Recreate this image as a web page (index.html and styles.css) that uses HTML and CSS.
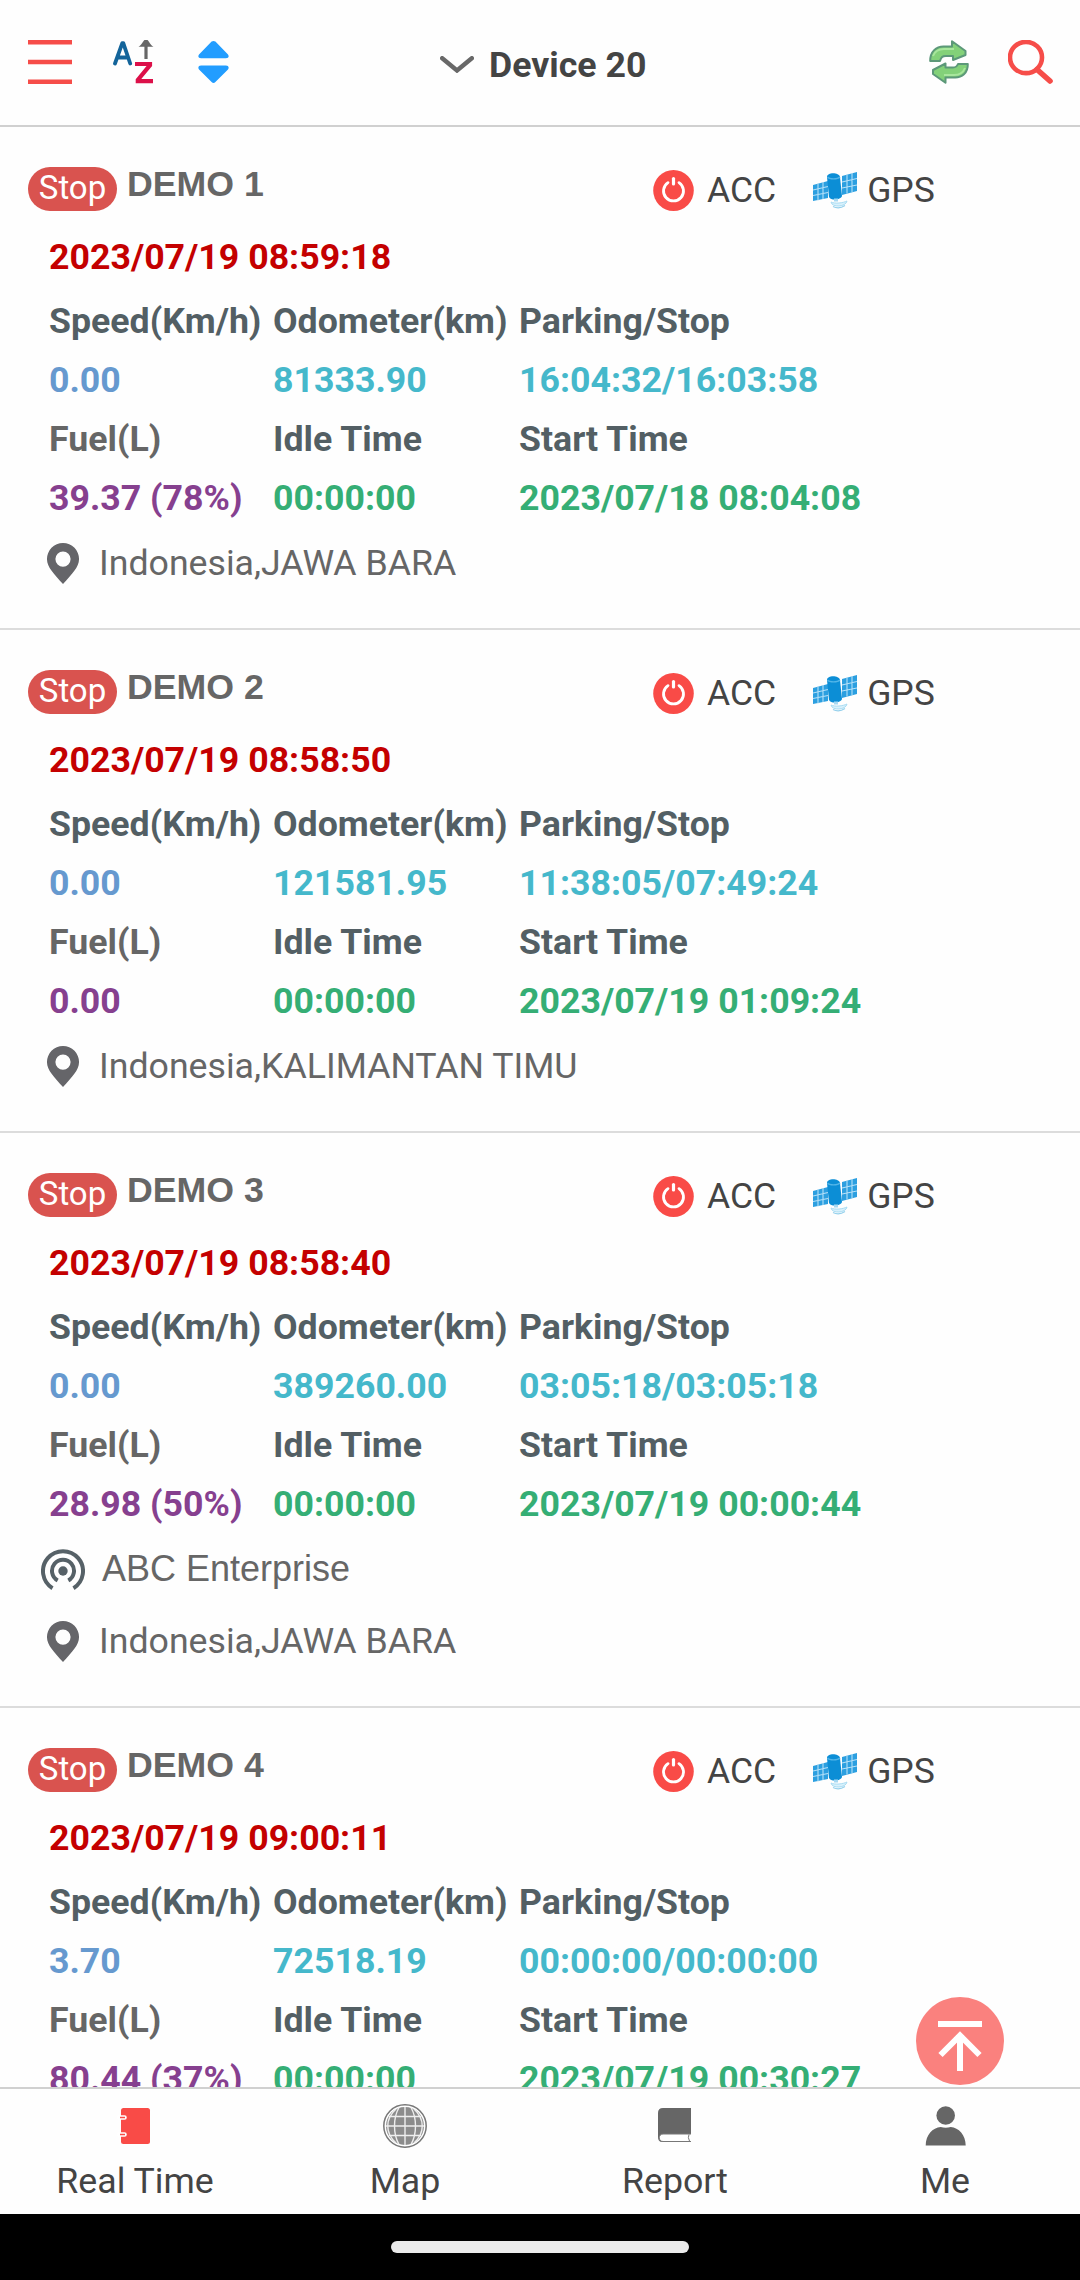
FILE: index.html
```html
<!DOCTYPE html>
<html lang="en">
<head>
<meta charset="utf-8">
<title>Device list</title>
<link rel="stylesheet" href="styles.css">
</head>
<body>
<svg class="sprite" width="0" height="0" aria-hidden="true">
  <symbol id="power" viewBox="0 0 41 41">
    <ellipse cx="20.500" cy="20.500" rx="20.300" ry="20.500" fill="#f94b47"/>
    <path d="M15 12.600a10 10 0 1 0 11 0" fill="none" stroke="#fff" stroke-width="2.800" stroke-linecap="round"/>
    <path d="M20.500 8.500v5.500" stroke="#fff" stroke-width="3.200" stroke-linecap="round"/>
  </symbol>
  <symbol id="satellite" viewBox="0 0 44 38">
    <path d="M0 14l15-4v17L0 30zM29 5l15-4v19l-15 4z" fill="#2c9fe0"/>
    <path d="M0 19l15-3.500M0 24.500l15-3M5 12.500v17M10 11v17M29 11l15-3.500M29 17l15-3M34 3.500v19M39 2v19" stroke="#b5e0f8" stroke-width="1.100"/>
    <path d="M14 6c0-5 12-5 13 0l2 19c-1 4-11 5-13 1z" fill="#0c8ed6"/>
    <path d="M14.500 6c2 2.500 10 2.500 12.500 0" fill="none" stroke="#53b5e8" stroke-width="1.300"/>
    <path d="M23 27.500v3" stroke="#a5d8f2" stroke-width="4"/>
    <path d="M18 31c1 6 15 5 16-1-4 2-12 3-16 1z" fill="#d8f1fc" stroke="#a9dcf3" stroke-width="1"/>
    <path d="M20 35.500c4 2 9 1 12-1" fill="none" stroke="#94d0ec" stroke-width="1.200"/>
  </symbol>
  <symbol id="pin" viewBox="0 0 32 41">
    <path fill-rule="evenodd" d="M16 0a16 16 0 0 1 16 16.500C32 24 25 31 16 41 7 31 0 24 0 16.500A16 16 0 0 1 16 0zm0 8.500a7.600 7.600 0 1 0 0 15.200 7.600 7.600 0 0 0 0-15.200z" fill="#656569"/>
  </symbol>
  <symbol id="beacon" viewBox="0 0 44 41">
    <circle cx="22" cy="22" r="4.700" fill="#566167"/>
    <path d="M16.700 31.500a11 11 0 1 1 10.600 0M11.500 39.200a20 20 0 1 1 21 0" fill="none" stroke="#566167" stroke-width="4"/>
  </symbol>
</svg>

<div class="screen">
  <header class="topbar">
    <div class="tools-left">
      <svg width="44" height="44" viewBox="0 0 44 44"><path d="M0 2.200h44M0 22h44M0 41.700h44" stroke="#f64d49" stroke-width="4.600"/></svg>
      <svg class="az" width="42" height="44" viewBox="0 0 42 44">
        <path d="M2 23.500L9.300 3.200h1L17.200 23.500M4.500 17.500h10.500" fill="none" stroke="#13649a" stroke-width="3.800" stroke-linecap="round" stroke-linejoin="round"/>
        <path d="M22 24h15v1.200L24.800 40v1.200H40" fill="none" stroke="#dc1049" stroke-width="4.200"/>
        <path d="M33 19V6" stroke="#666" stroke-width="3.200"/>
        <path d="M25.500 6.700C29 5 30 1 31.500 0h3c1.500 1 2.500 5 6 6.700z" fill="#666"/>
      </svg>
      <svg class="sort" width="31" height="44" viewBox="0 0 31 44"><path d="M13.600 1.600q1.900-1.400 3.800 0L30 14.500q2 3.500-2 3.800H3q-4-.3-2-3.800zM1 29.500q-2-3.700 2-4h25q4 .3 2 4L17.400 42q-1.900 1.800-3.800 0z" fill="#229dff"/></svg>
    </div>
    <div class="heading">
      <svg width="34" height="17" viewBox="0 0 34 17"><path d="M2.200 2.200L17 14.500 31.800 2.200" fill="none" stroke="#686868" stroke-width="4.400" stroke-linecap="round"/></svg>
      <h1>Device 20</h1>
    </div>
    <div class="tools-right">
      <svg width="40" height="44" viewBox="0 0 40 44">
        <g fill="#83d179" stroke="#5c9879" stroke-width="2" stroke-linejoin="round">
          <path d="M1.200 21C1 12 7 5.800 16 6.500h7V1.200L36.500 11v4L24 20v-4h-7c-4 0-5 1.500-6 5z"/>
          <path d="M38.800 24C39 33 33 38 25 37.500h-8.500v5.300L4 34v-4l12.500-6.500v4H24c3 0 4-1 5-3.500z"/>
        </g>
        <path d="M4 16c2-5 6-7 11-7h10M36 28c-2 5-6 7-11 7H15" fill="none" stroke="#a8e69d" stroke-width="2"/>
      </svg>
      <svg width="45" height="44" viewBox="0 0 45 44"><ellipse cx="18" cy="17.500" rx="16" ry="15.600" fill="none" stroke="#f64d49" stroke-width="4.600"/><path d="M29 29.500L42 41" stroke="#f64d49" stroke-width="5.600" stroke-linecap="round"/></svg>
    </div>
  </header>

  <main class="list">
    <article class="card">
      <div class="title"><span class="badge">Stop</span><h2>DEMO 1</h2>
        <div class="flags"><svg class="power"><use href="#power"/></svg><span>ACC</span><svg class="sat"><use href="#satellite"/></svg><span>GPS</span></div></div>
      <p class="stamp">2023/07/19 08:59:18</p>
      <div class="stats">
        <span>Speed(Km/h)</span><span>Odometer(km)</span><span>Parking/Stop</span>
        <span class="blue">0.00</span><span class="cyan">81333.90</span><span class="cyan">16:04:32/16:03:58</span>
        <span class="gray">Fuel(L)</span><span>Idle Time</span><span>Start Time</span>
        <span class="purple">39.37 (78%)</span><span class="green">00:00:00</span><span class="green">2023/07/18 08:04:08</span>
      </div>
      <div class="place"><svg class="pin"><use href="#pin"/></svg><span>Indonesia,JAWA BARA</span></div>
    </article>
    <article class="card">
      <div class="title"><span class="badge">Stop</span><h2>DEMO 2</h2>
        <div class="flags"><svg class="power"><use href="#power"/></svg><span>ACC</span><svg class="sat"><use href="#satellite"/></svg><span>GPS</span></div></div>
      <p class="stamp">2023/07/19 08:58:50</p>
      <div class="stats">
        <span>Speed(Km/h)</span><span>Odometer(km)</span><span>Parking/Stop</span>
        <span class="blue">0.00</span><span class="cyan">121581.95</span><span class="cyan">11:38:05/07:49:24</span>
        <span class="gray">Fuel(L)</span><span>Idle Time</span><span>Start Time</span>
        <span class="purple">0.00</span><span class="green">00:00:00</span><span class="green">2023/07/19 01:09:24</span>
      </div>
      <div class="place"><svg class="pin"><use href="#pin"/></svg><span>Indonesia,KALIMANTAN TIMU</span></div>
    </article>
    <article class="card">
      <div class="title"><span class="badge">Stop</span><h2>DEMO 3</h2>
        <div class="flags"><svg class="power"><use href="#power"/></svg><span>ACC</span><svg class="sat"><use href="#satellite"/></svg><span>GPS</span></div></div>
      <p class="stamp">2023/07/19 08:58:40</p>
      <div class="stats">
        <span>Speed(Km/h)</span><span>Odometer(km)</span><span>Parking/Stop</span>
        <span class="blue">0.00</span><span class="cyan">389260.00</span><span class="cyan">03:05:18/03:05:18</span>
        <span class="gray">Fuel(L)</span><span>Idle Time</span><span>Start Time</span>
        <span class="purple">28.98 (50%)</span><span class="green">00:00:00</span><span class="green">2023/07/19 00:00:44</span>
      </div>
      <div class="place geofence"><svg class="beacon"><use href="#beacon"/></svg><span>ABC Enterprise</span></div>
      <div class="place"><svg class="pin"><use href="#pin"/></svg><span>Indonesia,JAWA BARA</span></div>
    </article>
    <article class="card">
      <div class="title"><span class="badge">Stop</span><h2>DEMO 4</h2>
        <div class="flags"><svg class="power"><use href="#power"/></svg><span>ACC</span><svg class="sat"><use href="#satellite"/></svg><span>GPS</span></div></div>
      <p class="stamp">2023/07/19 09:00:11</p>
      <div class="stats">
        <span>Speed(Km/h)</span><span>Odometer(km)</span><span>Parking/Stop</span>
        <span class="blue">3.70</span><span class="cyan">72518.19</span><span class="cyan">00:00:00/00:00:00</span>
        <span class="gray">Fuel(L)</span><span>Idle Time</span><span>Start Time</span>
        <span class="purple">80.44 (37%)</span><span class="green">00:00:00</span><span class="green">2023/07/19 00:30:27</span>
      </div>
    </article>
    <button class="to-top" aria-label="Back to top"><svg width="88" height="88" viewBox="0 0 88 88"><path d="M22 27h44M44 74V38M24.500 58L44 38.500 63.500 58" fill="none" stroke="#fff" stroke-width="6"/></svg></button>
  </main>

  <nav class="tabs">
    <div class="tab">
      <svg width="44" height="44" viewBox="-6 0 44 44"><path d="M4.500 4h24q2.500 0 2.500 2.500v31q0 2.500-2.500 2.500H4.500Q2 40 2 37.500V6.500Q2 4 4.500 4z" fill="#f94b47"/><path d="M0 13.500h5.500M0 30.500h5.500" stroke="#fff" stroke-width="4.600" stroke-linecap="round"/><path d="M1 13.500h5M1 30.500h5" stroke="#f94b47" stroke-width="1.600"/></svg>
      <span>Real Time</span>
    </div>
    <div class="tab">
      <svg width="44" height="44" viewBox="0 0 44 44"><circle cx="22" cy="22" r="21.200" fill="#fff" stroke="#777" stroke-width="1.500"/><circle cx="22" cy="22" r="19" fill="#8c8c8c"/><path d="M22 3v38M3 22h38M6 12.500h32M6 31.500h32M16 3.500C10 14 10 30 16 40.500M28 3.500C34 14 34 30 28 40.500M13 5C2 15 2 29 13 39M31 5C42 15 42 29 31 39" fill="none" stroke="#eee" stroke-width="1.400"/></svg>
      <span>Map</span>
    </div>
    <div class="tab">
      <svg width="44" height="44" viewBox="0 0 44 44"><path d="M10 4h28v34H8q-3-1-3-5V9q0-5 5-5z" fill="#666"/><path d="M38 30H10c-5 0-5 7.500 0 7.500h28z" fill="#fff"/><path d="M38 30H10c-5 0-5 7.500 0 7.500h28M36 30.500q-1.500 3 .5 6.500" fill="none" stroke="#777" stroke-width="1"/></svg>
      <span>Report</span>
    </div>
    <div class="tab">
      <svg width="44" height="44" viewBox="-.7 0 44 44"><circle cx="22" cy="11.500" r="9.300" fill="#666"/><path d="M2 41.500C2 31 9 23.500 17 23q5 1.400 10 0c8 .5 15 8 15 18.500z" fill="#666"/></svg>
      <span>Me</span>
    </div>
  </nav>
  <footer class="system"><div class="handle"></div></footer>
</div>
</body>
</html>
```
FILE: styles.css
```css
* { box-sizing: border-box; }
body, h1, h2, p { margin: 0; }
body {
  background: #fefefe;
  font: 400 35.7px Roboto, "Liberation Sans", sans-serif;
  color: #444;
}
svg { display: block; flex: none; }
.sprite { position: absolute; }
.screen {
  width: 1080px;
  height: 2280px;
  display: flex;
  flex-direction: column;
  overflow: hidden;
}

.topbar {
  height: 127px;
  flex: none;
  display: grid;
  grid-template-columns: 412px 1fr 151px;
  padding-bottom: 1px;
  border-bottom: 2px solid #d0d0d0;
}
.tools-left, .tools-right { display: flex; align-items: flex-start; padding-top: 40px; }
.tools-left { padding-left: 28px; }
.az { margin-left: 41px; }
.sort { margin-left: 43px; }
.tools-right { gap: 39px; }
.heading {
  display: flex;
  align-items: center;
  gap: 15px;
  padding: 5px 0 0 28px;
}
.heading h1 { font-size: 35.7px; font-weight: 700; line-height: 60px; }

.list { position: relative; flex: 1; min-height: 0; overflow: hidden; }
.card { padding: 40px 0 29px 28px; border-bottom: 2px solid #dcdcdc; }
.title { height: 44px; display: flex; }
.badge {
  width: 89px;
  height: 44px;
  border-radius: 22px;
  background: #d9534f;
  color: #fff;
  font-size: 33px;
  line-height: 42px;
  text-align: center;
}
.title h2 {
  width: 525px;
  padding-left: 10px;
  font: 700 35.7px/35px "Liberation Sans", Arial, sans-serif;
  color: #666;
}
.flags { display: flex; align-items: center; padding-left: 11px; font-size: 35.5px; line-height: 46px; }
.flags span { padding-top: 2px; }
.power { width: 41px; height: 41px; margin: 2px 13px 0 0; }
.sat { width: 44px; height: 38px; margin: 2px 10px 0 37px; }
.stamp {
  height: 80px;
  padding: 16px 0 0 21px;
  font-weight: 700;
  line-height: 60px;
  color: #c40000;
}
.stats {
  display: grid;
  grid-template-columns: 224px 246px 1fr;
  grid-auto-rows: 59px;
  padding-left: 21px;
  font-weight: 700;
  line-height: 60px;
  color: #535f64;
  white-space: nowrap;
}
.blue { color: #6699cf; }
.cyan { color: #45b8cb; }
.gray { color: #666; }
.purple { color: #86408f; }
.green { color: #35ae75; }
.place { height: 72px; display: flex; align-items: center; padding-left: 19px; color: #666; }
.pin { width: 32px; height: 41px; margin-right: 20px; }
.geofence { padding-left: 13px; font: 36px/42px "Liberation Sans", Arial, sans-serif; }
.beacon { width: 44px; height: 41px; margin-right: 17px; }

.to-top {
  position: absolute;
  right: 76px;
  bottom: 2px;
  width: 88px;
  height: 88px;
  padding: 0;
  border: 0;
  border-radius: 50%;
  background: #fa817e;
}

.tabs {
  height: 127px;
  flex: none;
  display: grid;
  grid-template-columns: repeat(4, 1fr);
  border-top: 2px solid #d0d0d0;
}
.tab { display: flex; flex-direction: column; align-items: center; padding-top: 15px; }
.tab span { margin-top: 10px; line-height: 46px; }

.system { height: 66px; flex: none; display: flex; justify-content: center; padding-top: 27px; background: #000; }
.handle { width: 298px; height: 12px; border-radius: 6px; background: #ebebeb; }
```
